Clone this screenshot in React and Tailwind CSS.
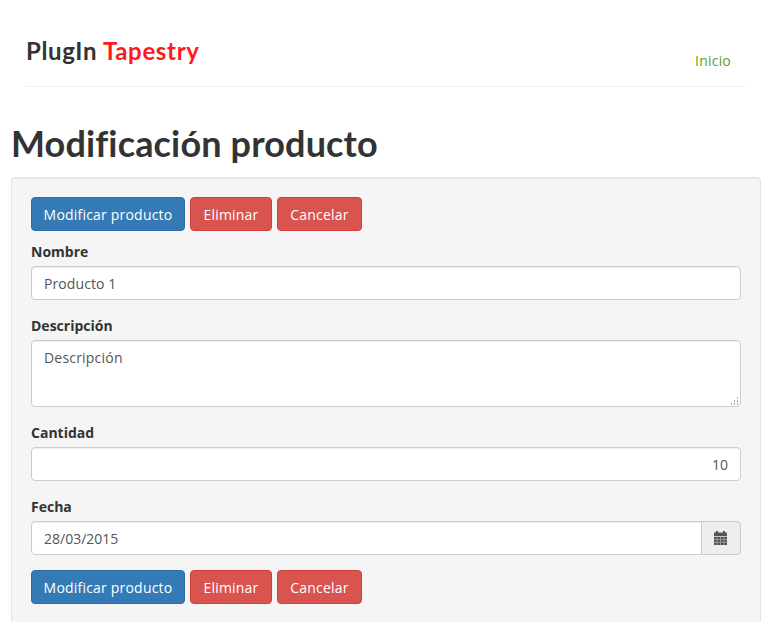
import React from 'react';

const Buttons = () => (
  <div className="flex gap-[5px]">
    <button className="w-[154px] h-[34px] rounded-[4px] border border-[#2e6da4] bg-[#337ab7] text-white text-[14px] tracking-[0.2px]">Modificar producto</button>
    <button className="w-[82px] h-[34px] rounded-[4px] border border-[#d43f3a] bg-[#d9534f] text-white text-[14px] tracking-[0.2px]">Eliminar</button>
    <button className="w-[85px] h-[34px] rounded-[4px] border border-[#d43f3a] bg-[#d9534f] text-white text-[14px] tracking-[0.2px]">Cancelar</button>
  </div>
);

const Label = ({ children }) => (
  <label className="block h-[20px] mb-[4px] text-[14px] leading-[20px] font-bold text-[#333]">{children}</label>
);

const inputClass = 'block w-full h-[34px] px-[12px] rounded-[4px] border border-[#ccc] bg-white text-[14px] text-[#555] shadow-[inset_0_1px_1px_rgba(0,0,0,0.075)] outline-none';

const App = () => {
  return (
    <div className="h-[622px] overflow-hidden bg-white text-[#333] font-['Open_Sans',sans-serif]">
      <div className="mx-[26px] w-[720px] h-[87px] border-b border-[#eee] flex justify-between">
        <h3 className="pt-[34px] text-[24px] leading-[34px] font-bold tracking-[0.65px] font-['Lato',sans-serif]">
          PlugIn <span className="text-[#ff1a1a]">Tapestry</span>
        </h3>
        <a className="mt-[51px] mr-[15px] h-[20px] text-[14px] leading-[20px] tracking-[0.2px] text-[#5f9e37]">Inicio</a>
      </div>
      <h1 className="ml-[11px] mt-[36px] h-[40px] text-[36px] leading-[40px] font-bold tracking-[0.15px] font-['Lato',sans-serif]">Modificación producto</h1>
      <div className="mx-[11px] mt-[14px] w-[750px] h-[460px] px-[19px] pt-[19px] rounded-[4px] border border-[#e3e3e3] bg-[#f5f5f5] shadow-[inset_0_1px_1px_rgba(0,0,0,0.05)]">
        <Buttons />
        <div className="mt-[11px]">
          <Label>Nombre</Label>
          <input className={`${inputClass} tracking-[0.1px]`} defaultValue="Producto 1" readOnly />
        </div>
        <div className="mt-[16px]">
          <Label>Descripción</Label>
          <div className="relative">
            <textarea className="block w-full h-[67px] px-[12px] py-[7px] resize-none rounded-[4px] border border-[#ccc] bg-white text-[14px] leading-[20px] tracking-[0.2px] text-[#555] shadow-[inset_0_1px_1px_rgba(0,0,0,0.075)] outline-none" defaultValue="Descripción" readOnly />
            {/* textarea resize grip */}
            <svg className="absolute right-[1px] bottom-[1px]" width="10" height="10" viewBox="0 0 10 10" fill="#aaa">
              <rect x="7" y="1" width="1" height="2" />
              <rect x="4" y="4" width="1" height="2" />
              <rect x="7" y="4" width="1" height="2" />
              <rect x="1" y="7" width="1" height="2" />
              <rect x="4" y="7" width="1" height="2" />
              <rect x="7" y="7" width="1" height="2" />
            </svg>
          </div>
        </div>
        <div className="mt-[16px]">
          <Label>Cantidad</Label>
          <input className={`${inputClass} text-right`} defaultValue="10" readOnly />
        </div>
        <div className="mt-[16px]">
          <Label>Fecha</Label>
          <div className="flex">
            <input className="block flex-1 min-w-0 h-[34px] px-[12px] rounded-l-[4px] border border-[#ccc] bg-white text-[14px] text-[#555] shadow-[inset_0_1px_1px_rgba(0,0,0,0.075)] outline-none" defaultValue="28/03/2015" readOnly />
            <span className="w-[40px] h-[34px] -ml-px pr-[2px] flex items-center justify-center rounded-r-[4px] border border-[#ccc] bg-[#eee] text-[#555]">
              <svg width="13" height="14" viewBox="0 0 13 14" fill="currentColor">
                <path d="M0 1.5h2V0h2v1.5h5V0h2v1.5h2V5H0z" />
                <rect x="0" y="5.75" width="13" height="8.25" />
                <path d="M3 6v8M6.5 6v8M10 6v8M0 8.5h13M0 11.25h13" stroke="#bbb" strokeWidth="0.6" fill="none" />
              </svg>
            </span>
          </div>
        </div>
        <div className="mt-[15px]">
          <Buttons />
        </div>
      </div>
    </div>
  );
};

export default App;
